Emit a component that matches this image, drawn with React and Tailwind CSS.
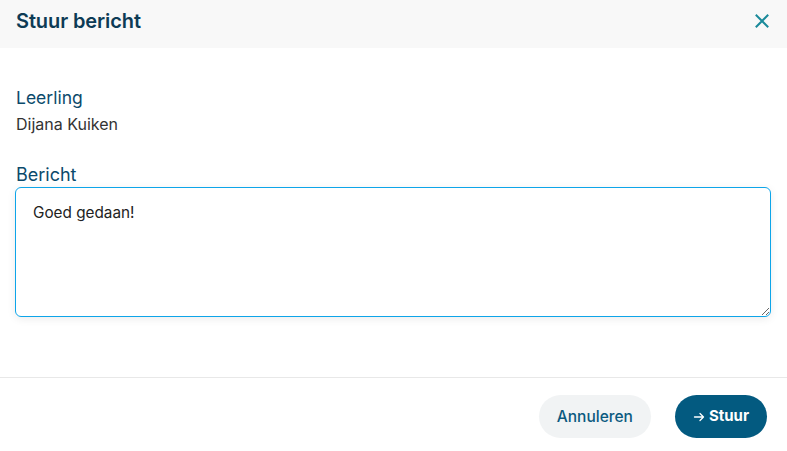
import { useState } from 'react'

export default function App() {
  const [message, setMessage] = useState('Goed gedaan!')

  return (
    <div className="w-[787px] h-[451px] bg-white flex flex-col font-['Inter',sans-serif]">
      {/* Header */}
      <div className="h-[48px] bg-[#f8f8f8] flex items-center justify-between pl-4 pr-4 pb-[7px]">
        <h1 className="text-[20px] font-semibold text-[#0d3b55] tracking-[-0.1px]">Stuur bericht</h1>
        <button className="text-[#1a8a9a] w-6 h-6 flex items-center justify-center -mr-[3px]">
          <svg width="16" height="16" viewBox="0 0 16 16" fill="none" stroke="currentColor" strokeWidth="2" strokeLinecap="square">
            <path d="M2.5 2.5l11 11M13.5 2.5l-11 11" />
          </svg>
        </button>
      </div>

      {/* Body */}
      <div className="flex-1 px-4 pt-[39px]">
        <div className="flex flex-col">
          <span className="text-[17.5px] leading-[22px] text-[#0b4a6b]">Leerling</span>
          <span className="text-[16px] leading-[20px] text-[#333] mt-[5px]">Dijana Kuiken</span>
        </div>
        <div className="flex flex-col mt-[30px]">
          <span className="text-[18px] leading-[22px] text-[#0b4a6b]">Bericht</span>
          <textarea
            value={message}
            onChange={(e) => setMessage(e.target.value)}
            className="mt-[1px] -ml-px w-[756px] h-[130px] rounded-[6px] border border-[#0ea5e9] shadow-[0_2px_8px_rgba(0,0,0,0.08)] px-[17px] py-[14px] text-[15.3px] leading-[22px] text-[#222] outline-none"
          />
        </div>
      </div>

      {/* Footer */}
      <div className="border-t border-[#e8e8e8] h-[74px] flex items-center justify-end gap-6 px-5 pt-[4px]">
        <button className="h-[43px] px-[18px] rounded-full bg-[#f1f3f4] text-[15.5px] font-medium text-[#0b5a80]">
          Annuleren
        </button>
        <button className="h-[43px] px-[18px] rounded-full bg-[#035a80] text-[15px] font-bold text-white flex items-center gap-[4px]">
          <svg width="12" height="12" viewBox="0 0 12 12" fill="none" stroke="currentColor" strokeWidth="1.3" strokeLinecap="round" strokeLinejoin="round">
            <path d="M1.5 6h9M7 2.5L10.5 6 7 9.5" />
          </svg>
          Stuur
        </button>
      </div>
    </div>
  )
}
